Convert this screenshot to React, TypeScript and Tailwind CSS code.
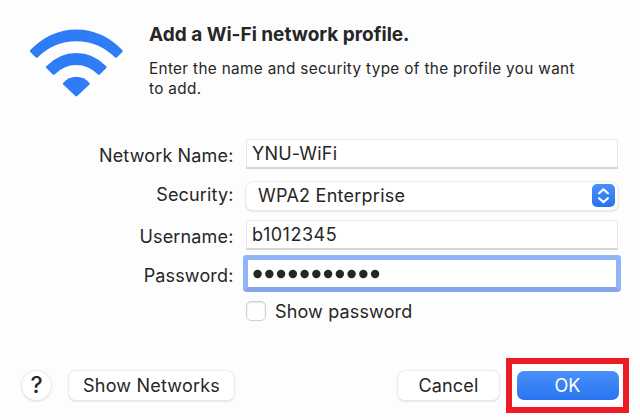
import type { ReactNode } from 'react';

function WifiIcon() {
  return (
    <svg width="96" height="70" viewBox="29 28 96 70" fill="#2f7df6" aria-hidden="true">
      <path d="M30.3 50.1 Q50.5 29.6 76.3 29.6 Q102.1 29.6 122.3 50.1 Q123.1 51 122.3 51.9 L116.8 57.4 Q115.9 58.3 115 57.4 Q98.5 41.2 76.3 41.2 Q54.1 41.2 37.6 57.4 Q36.7 58.3 35.8 57.4 L30.3 51.9 Q29.5 51 30.3 50.1 Z" />
      <path d="M46.3 66.3 Q59.2 53.1 76.3 53.1 Q93.4 53.1 106.3 66.3 Q107 67.1 106.3 67.9 L99.8 74.4 Q98.9 75.3 98 74.4 Q88.8 64.9 76.3 64.9 Q63.8 64.9 54.6 74.4 Q53.7 75.3 52.8 74.4 L46.3 67.9 Q45.6 67.1 46.3 66.3 Z" />
      <path d="M63.1 82.9 Q68.7 76.8 76.3 76.8 Q83.9 76.8 89.5 82.9 Q90.2 83.7 89.4 84.5 L77.2 96 Q76.3 96.8 75.4 96 L63.2 84.5 Q62.4 83.7 63.1 82.9 Z" />
    </svg>
  );
}

function Row({ label, className, labelClass, children }: { label: string; className: string; labelClass: string; children: ReactNode }) {
  return (
    <div className={`flex items-center ${className}`}>
      <span className={`w-[246px] shrink-0 whitespace-nowrap pr-[12.5px] text-right text-[18px] leading-6 tracking-[0.15px] ${labelClass}`}>{label}</span>
      {children}
    </div>
  );
}

const field =
  'h-[30px] w-[372px] border border-[#e9e9e9] border-b-2 border-b-[#d6d6d6] bg-white pl-[5px] text-[18px] leading-[27px]';
const button =
  'flex h-[29px] items-center justify-center whitespace-nowrap rounded-[7px] bg-white pb-px text-[18px] tracking-[0.2px] shadow-[0_0_1px_1px_#ececec,0_1px_2px_#b8b8b8]';

export default function App() {
  return (
    <main className="flex h-[420px] w-[640px] flex-col overflow-hidden bg-[#fdfdfd] font-['Inter',sans-serif] text-[#262626]">
      <header className="flex h-[139px] shrink-0 pl-[29px] pt-[28px]">
        <WifiIcon />
        <div className="ml-6 -mt-[5px]">
          <h1 className="whitespace-nowrap text-[19px] font-bold leading-6">Add a Wi-Fi network profile.</h1>
          <p className="mt-[12px] whitespace-nowrap text-[15.3px] leading-[20.4px] tracking-[0.34px]">
            Enter the name and security type of the profile you want<br />to add.
          </p>
        </div>
      </header>

      <Row label="Network Name:" className="h-[30px]" labelClass="pt-[3px]">
        <div className={`${field} tracking-[0.2px]`}>YNU-WiFi</div>
      </Row>
      <Row label="Security:" className="mt-[12px] h-[29px]" labelClass="pb-[2px]">
        <div className="flex h-[28px] w-[372px] items-center justify-between rounded-[7px] bg-white pl-[12px] pr-[3px] text-[18px] tracking-[0.25px] shadow-[0_0_1px_1px_#ececec,0_1px_2px_#b8b8b8]">
          <span className="-mt-px">WPA2 Enterprise</span>
          <span className="flex size-[23px] items-center justify-center rounded-[5px] bg-linear-to-b from-[#4890fa] to-[#2873ee]">
            <svg width="13" height="19" viewBox="0 0 13 19" fill="none" stroke="white" strokeWidth="2.2" strokeLinecap="round" strokeLinejoin="round">
              <path d="M2.1 7.2 6.5 3.3 10.9 7.2M2.1 12.2 6.5 16.1 10.9 12.2" />
            </svg>
          </span>
        </div>
      </Row>
      <Row label="Username:" className="mt-[10px] h-[30px]" labelClass="pt-[3px]">
        <div className={`${field} tracking-[0.5px]`}>b1012345</div>
      </Row>
      <Row label="Password:" className="mt-[5px] h-[37px]" labelClass="pt-[4px]">
        <div className="-ml-[3px] flex h-[37px] w-[378px] items-center rounded-[4px] border-[5px] border-[#92b4f7] border-b-[#85a6e9] bg-white pl-[5px]">
          <svg width="128" height="10" viewBox="0 0 128 10" fill="#262626" role="img" aria-label="Password">
            {Array.from({ length: 11 }, (_, i) => (
              <circle key={i} cx={4.6 + i * 11.75} cy="5" r="4.2" />
            ))}
          </svg>
        </div>
      </Row>

      <label className="ml-[246px] mt-[8px] flex h-[22px] shrink-0 items-center gap-[9px] text-[18px] tracking-[0.15px]">
        <span className="size-[20px] rounded-[5px] border border-[#cfcfcf] bg-white shadow-[inset_0_1px_2px_#e4e4e4]" />
        Show password
      </label>

      <footer className="mt-[36px] flex h-[55px] shrink-0 items-center pl-[22px]">
        <div className="flex size-[29px] items-center justify-center rounded-full bg-white text-[23px] font-medium shadow-[0_0_1px_1px_#ececec,0_1px_2px_#b8b8b8]">?</div>
        <div className={`ml-[18px] w-[165px] ${button}`}>Show Networks</div>
        <div className={`ml-[164px] w-[101px] ${button}`}>Cancel</div>
        <div className="ml-[7px] flex h-[55px] w-[123px] items-center justify-center border-[6px] border-[#ed1b24] bg-white">
          <div className="flex h-[29px] w-[102px] items-center justify-center rounded-[7px] bg-linear-to-b from-[#4991fa] to-[#2973ef] pb-px text-[18px] text-white">OK</div>
        </div>
      </footer>
    </main>
  );
}
